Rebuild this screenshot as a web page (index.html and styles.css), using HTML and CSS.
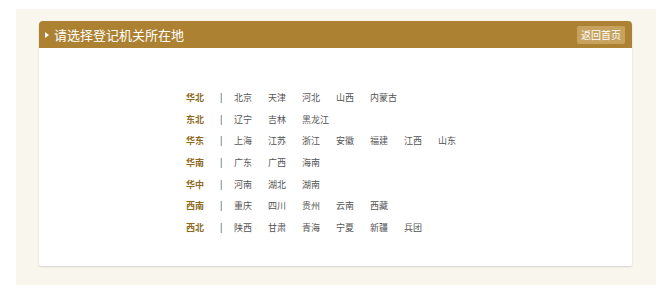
FILE: index.html
```html
<!DOCTYPE html>
<html lang="zh-CN">
<head>
    <meta charset="UTF-8">
    <meta name="viewport" content="width=device-width, initial-scale=1.0">
    <title>请选择登记机关所在地</title>
    <link rel="stylesheet" href="styles.css">
</head>
<body>
    <div class="wrap">
        <div class="panel">
            <div class="panel-head">
                <h2><span class="arrow"></span>请选择登记机关所在地</h2>
                <a class="back-btn" href="#">返回首页</a>
            </div>
            <div class="panel-body">
                <ul class="area-list">
                    <li>
                        <span class="area">华北</span><span class="sep">|</span>
                        <a href="#">北京</a><a href="#">天津</a><a href="#">河北</a><a href="#">山西</a><a href="#">内蒙古</a>
                    </li>
                    <li>
                        <span class="area">东北</span><span class="sep">|</span>
                        <a href="#">辽宁</a><a href="#">吉林</a><a href="#">黑龙江</a>
                    </li>
                    <li>
                        <span class="area">华东</span><span class="sep">|</span>
                        <a href="#">上海</a><a href="#">江苏</a><a href="#">浙江</a><a href="#">安徽</a><a href="#">福建</a><a href="#">江西</a><a href="#">山东</a>
                    </li>
                    <li>
                        <span class="area">华南</span><span class="sep">|</span>
                        <a href="#">广东</a><a href="#">广西</a><a href="#">海南</a>
                    </li>
                    <li>
                        <span class="area">华中</span><span class="sep">|</span>
                        <a href="#">河南</a><a href="#">湖北</a><a href="#">湖南</a>
                    </li>
                    <li>
                        <span class="area">西南</span><span class="sep">|</span>
                        <a href="#">重庆</a><a href="#">四川</a><a href="#">贵州</a><a href="#">云南</a><a href="#">西藏</a>
                    </li>
                    <li>
                        <span class="area">西北</span><span class="sep">|</span>
                        <a href="#">陕西</a><a href="#">甘肃</a><a href="#">青海</a><a href="#">宁夏</a><a href="#">新疆</a><a href="#">兵团</a>
                    </li>
                </ul>
            </div>
        </div>
    </div>
</body>
</html>
```

FILE: styles.css
```css
body {
    margin: 0;
    background-color: #fff;
    font-family: "Noto Sans CJK SC", "Noto Sans", sans-serif;
}
.wrap {
    margin: 9px 12px 14px 16px;
    background-color: #f9f6ee;
    padding: 12px 24px 19px 23px;
    height: 245px;
}
.panel {
    background-color: #fff;
    border-radius: 4px 4px 2px 2px;
    box-shadow: 0 1px 2px rgba(0, 0, 0, 0.15);
}
.panel-head {
    display: flex;
    justify-content: space-between;
    align-items: center;
    height: 27px;
    padding: 0 7px 0 6px;
    background-color: #ac8232;
    border-radius: 4px 4px 0 0;
}
.panel-head h2 {
    margin: 0;
    display: flex;
    align-items: center;
    font-size: 13px;
    font-weight: normal;
    color: #fff;
}
.arrow {
    width: 0;
    height: 0;
    margin-right: 5px;
    border-top: 3px solid transparent;
    border-bottom: 3px solid transparent;
    border-left: 4px solid #fff;
}
.back-btn {
    display: block;
    padding: 0 4px;
    height: 18px;
    line-height: 18px;
    background-color: #c6a25e;
    border-radius: 2px;
    font-size: 10px;
    color: #fff;
    text-decoration: none;
}
.panel-body {
    padding: 39px 0 27px 147px;
}
.area-list {
    margin: 0;
    padding: 0;
    list-style: none;
}
.area-list li {
    display: flex;
    height: 21.7px;
    line-height: 21.7px;
    font-size: 9px;
}
.area {
    width: 34px;
    font-weight: bold;
    color: #8f6a22;
}
.sep {
    width: 14px;
    color: #333;
}
.area-list a {
    width: 34px;
    color: #555;
    text-decoration: none;
    white-space: nowrap;
}
```
